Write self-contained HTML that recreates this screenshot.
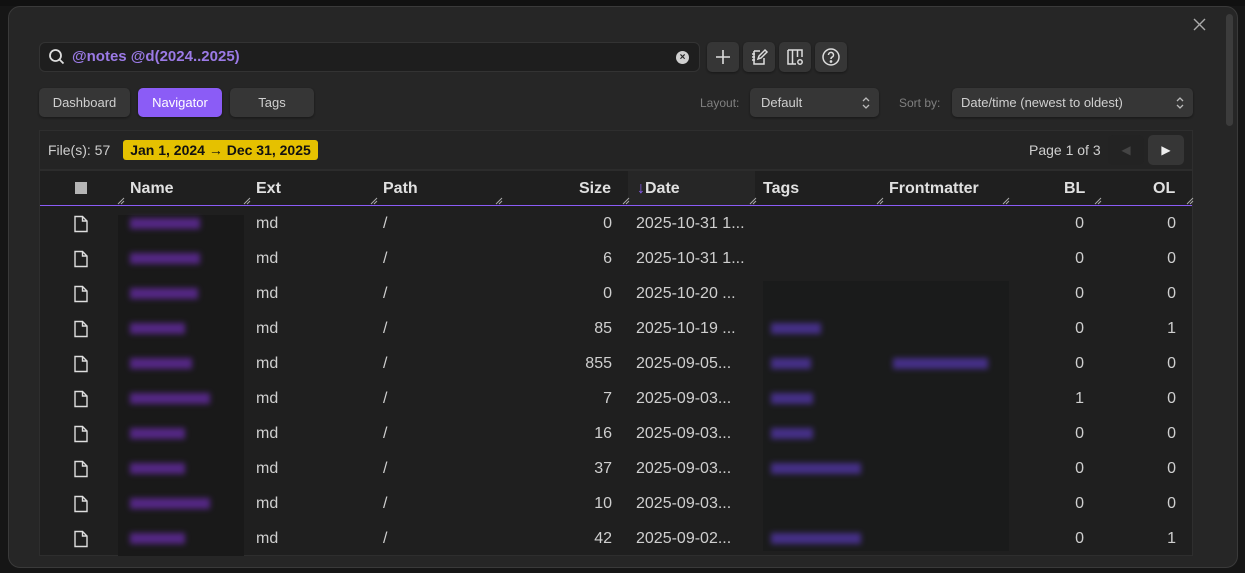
<!DOCTYPE html>
<html><head><meta charset="utf-8"><style>
*{box-sizing:border-box;margin:0;padding:0}
body{width:1245px;height:573px;background:#161616;font-family:"Liberation Sans",sans-serif;color:#dadada;position:relative;overflow:hidden}
.a{position:absolute}
.modal{left:8px;top:6px;width:1230px;height:562px;background:#262626;border:1px solid #3a3a3a;border-radius:12px}
.btn{position:absolute;background:#363636;border-radius:5px;box-shadow:0 1px 2px rgba(0,0,0,.4);font-size:13px;color:#d0d0d0;text-align:center;line-height:29px}
.ib{position:absolute;top:42px;width:32px;height:30px;background:#363636;border-radius:5px;box-shadow:0 1px 2px rgba(0,0,0,.4)}
.ib svg{position:absolute;left:6px;top:5px}
.th{position:absolute;top:172px;height:34px;line-height:34px;font-size:16px;font-weight:bold;color:#e0e0e0}
.grip{position:absolute;top:197px;width:8px;height:8px}
.cell{position:absolute;font-size:16px;color:#cfcfcf}
</style></head><body>
<div class="a" style="left:0;top:0;width:1245px;height:6px;background:#111"></div>
<div class="a modal"></div>
<div class="a" style="left:1226px;top:14px;width:7px;height:112px;background:#3c3c3c;border-radius:4px"></div>
<svg class="a" style="left:1193px;top:18px" width="13" height="13"><path d="M1 1l11 11M12 1L1 12" stroke="#aaa" stroke-width="1.4"/></svg>

<div class="a" style="left:39px;top:42px;width:661px;height:30px;background:#1e1e1e;border:1px solid #333;border-radius:6px"></div>
<svg class="a" style="left:48px;top:48px" width="18" height="18" viewBox="0 0 18 18"><circle cx="7.5" cy="7.5" r="5.5" fill="none" stroke="#ddd" stroke-width="1.8"/><line x1="11.5" y1="11.5" x2="15.5" y2="15.5" stroke="#ddd" stroke-width="1.8"/></svg>
<div class="a" style="left:72px;top:48px;font-size:15px;font-weight:bold;color:#9b7ae6">@notes @d(2024..2025)</div>
<div class="a" style="left:676px;top:51px;width:13px;height:13px;border-radius:50%;background:#cfcfcf;color:#222;font-size:10px;font-weight:bold;text-align:center;line-height:13px">×</div>

<div class="ib" style="left:707px"><svg width="20" height="20"><path d="M10 3v14M3 10h14" stroke="#ddd" stroke-width="1.6"/></svg></div>
<div class="ib" style="left:743px"><svg width="20" height="20" fill="none" stroke="#ddd" stroke-width="1.5"><path d="M5 4h6M5 4v13h10v-6M3 7h3M3 10h3M3 13h3M9 12l1-3 6-6 2 2-6 6z"/></svg></div>
<div class="ib" style="left:779px"><svg width="20" height="20" fill="none" stroke="#ddd" stroke-width="1.5"><path d="M3 3h14v7M3 3v14h8M7.5 3v14M12.5 3v7"/><circle cx="15" cy="15" r="2.2"/></svg></div>
<div class="ib" style="left:815px"><svg width="20" height="20" fill="none" stroke="#ddd" stroke-width="1.5"><circle cx="10" cy="10" r="8"/><path d="M7.5 8a2.5 2.5 0 1 1 3.5 2.2c-.8.4-1 1-1 1.8"/><circle cx="10" cy="14.5" r=".6" fill="#ddd"/></svg></div>

<div class="btn" style="left:39px;top:88px;width:91px">Dashboard</div>
<div class="btn" style="left:138px;top:88px;width:84px;background:#8b5cf6;color:#fff">Navigator</div>
<div class="btn" style="left:230px;top:88px;width:84px">Tags</div>
<div class="a" style="left:700px;top:96px;font-size:12px;color:#808080">Layout:</div>
<div class="btn" style="left:750px;top:88px;width:129px;text-align:left;padding-left:11px">Default<svg style="position:absolute;right:9px;top:9px" width="8" height="12" fill="none" stroke="#bbb" stroke-width="1.3"><path d="M1 4l3-3 3 3M1 8l3 3 3-3"/></svg></div>
<div class="a" style="left:899px;top:96px;font-size:12px;color:#808080">Sort by:</div>
<div class="btn" style="left:952px;top:88px;width:241px;text-align:left;padding-left:9px">Date/time (newest to oldest)<svg style="position:absolute;right:9px;top:9px" width="8" height="12" fill="none" stroke="#bbb" stroke-width="1.3"><path d="M1 4l3-3 3 3M1 8l3 3 3-3"/></svg></div>

<div class="a" style="left:39px;top:130px;width:1154px;height:426px;background:#1f1f1f;border:1px solid #2e2e2e"></div>
<div class="a" style="left:40px;top:131px;width:1152px;height:38px;background:#242424"></div>
<div class="a" style="left:40px;top:169px;width:1152px;height:2px;background:#2c2c2c"></div>
<div class="a" style="left:48px;top:142px;font-size:14px;color:#cfcfcf">File(s): 57</div>
<div class="a" style="left:123px;top:140px;width:195px;height:20px;background:#e5c100;border-radius:3px;color:#111;font-size:14px;font-weight:bold;line-height:20px;text-align:center">Jan 1, 2024 → Dec 31, 2025</div>
<div class="a" style="left:1029px;top:142px;font-size:14px;color:#cfcfcf">Page 1 of 3</div>
<div class="a" style="left:1108px;top:135px;width:36px;height:30px;background:#232323;border-radius:5px;color:#444;font-size:12px;text-align:center;line-height:30px">◀</div>
<div class="a" style="left:1148px;top:135px;width:36px;height:30px;background:#363636;border-radius:5px;color:#eee;font-size:12px;text-align:center;line-height:30px">▶</div>

<div class="a" style="left:628px;top:171px;width:127px;height:34px;background:#262626"></div>
<div class="a" style="left:75px;top:182px;width:12px;height:12px;background:#b5b5b5"></div>
<div class="th" style="left:130px">Name</div>
<div class="th" style="left:256px">Ext</div>
<div class="th" style="left:383px">Path</div>
<div class="th" style="left:579px">Size</div>
<div class="th" style="left:637px"><span style="color:#8b5cf6">↓</span>Date</div>
<div class="th" style="left:763px">Tags</div>
<div class="th" style="left:889px">Frontmatter</div>
<div class="th" style="left:1064px">BL</div>
<div class="th" style="left:1153px">OL</div>
<div id="grips"></div>
<div class="a" style="left:40px;top:205px;width:1152px;height:1px;background:#8b5cf6"></div>

<div class="a" style="left:118px;top:215px;width:126px;height:341px;background:#191919"></div>
<div class="a" style="left:763px;top:281px;width:246px;height:270px;background:#1a1b1b"></div>

<div id="rows"></div>
<script>
var g="";[117,243,370,495,622,749,876,1002,1094,1186].forEach(function(x){g+='<svg class="grip" style="left:'+x+'px"><path d="M1 7l6-6M4 7l3-3" stroke="#aaa" stroke-width="1"/></svg>';});
document.getElementById("grips").innerHTML=g;
var d=[["0","2025-10-31 1...","0","0",70],["6","2025-10-31 1...","0","0",70],["0","2025-10-20 ...","0","0",68],["85","2025-10-19 ...","0","1",55],["855","2025-09-05...","0","0",62],["7","2025-09-03...","1","0",80],["16","2025-09-03...","0","0",55],["37","2025-09-03...","0","0",55],["10","2025-09-03...","0","0",80],["42","2025-09-02...","0","1",55]];
var tg=[0,0,0,50,40,42,42,90,0,90];
var h="";
d.forEach(function(r,i){var y=206+i*35;var c=y+18;
h+='<svg class="a" style="left:73px;top:'+(c-9)+'px" width="16" height="18" fill="none" stroke="#ddd" stroke-width="1.4"><path d="M2 1.5h7.5l4.5 4.5v10.5H2zM9.5 1.5v4.5h4.5"/></svg>';
h+='<div class="a" style="left:130px;top:'+(c-6)+'px;width:'+r[4]+'px;height:11px;background:#5e2a96;filter:blur(3px);opacity:.85"></div>';
if(tg[i])h+='<div class="a" style="left:771px;top:'+(c-6)+'px;width:'+tg[i]+'px;height:11px;background:#4d3399;filter:blur(3px);opacity:.85"></div>';
if(i==4)h+='<div class="a" style="left:893px;top:'+(c-6)+'px;width:95px;height:11px;background:#4d3399;filter:blur(3px);opacity:.85"></div>';
h+='<div class="cell" style="left:256px;top:'+(c-9)+'px">md</div>';
h+='<div class="cell" style="left:383px;top:'+(c-9)+'px">/</div>';
h+='<div class="cell" style="left:500px;width:112px;text-align:right;top:'+(c-9)+'px">'+r[0]+'</div>';
h+='<div class="cell" style="left:636px;top:'+(c-9)+'px">'+r[1]+'</div>';
h+='<div class="cell" style="left:1000px;width:84px;text-align:right;top:'+(c-9)+'px">'+r[2]+'</div>';
h+='<div class="cell" style="left:1100px;width:76px;text-align:right;top:'+(c-9)+'px">'+r[3]+'</div>';});
document.getElementById("rows").innerHTML=h;
</script>
</body></html>
